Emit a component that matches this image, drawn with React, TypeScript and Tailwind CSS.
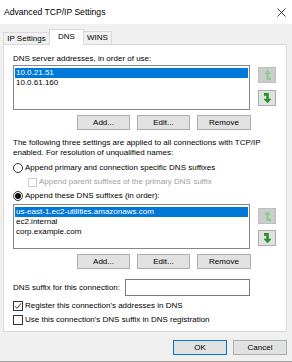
import React from "react";

function ArrowBtn({ dir, enabled }: { dir: "up" | "down"; enabled: boolean }) {
  const fill = enabled ? "#1e9e1e" : "#86cf86";
  return (
    <div
      className={
        enabled
          ? "w-[18px] h-[16px] bg-[#e1e1e1] border border-[#adadad] flex items-center justify-center"
          : "w-[18px] h-[16px] bg-[#cccccc] border border-[#bfbfbf] flex items-center justify-center"
      }
    >
      <svg width="7" height="10" viewBox="0 0 7 10">
        {dir === "up" ? (
          <path d="M3.5 0 L7 4 H4.5 V7.5 H7 V10 H2.5 V4 H0 Z" fill={fill} stroke={enabled ? "#0a6a0a" : "none"} strokeWidth={enabled ? 0.4 : 0} />
        ) : (
          <path d="M3.5 10 L0 6 H2.5 V2.5 H0 V0 H4.5 V6 H7 Z" fill={fill} stroke={enabled ? "#0a6a0a" : "none"} strokeWidth={enabled ? 0.4 : 0} />
        )}
      </svg>
    </div>
  );
}

function Btn({ label, w }: { label: string; w: string }) {
  return (
    <div className={`${w} h-[15px] bg-[#e1e1e1] border border-[#adadad] flex items-center justify-center leading-none`}>
      {label}
    </div>
  );
}

function ListBox({ items, h }: { items: string[]; h: string }) {
  return (
    <div className={`w-[237px] ${h} bg-white border border-[#828790] pt-[2px] px-[1px]`}>
      {items.map((it, i) => (
        <div
          key={it}
          className={
            i === 0
              ? "h-[10px] leading-[10px] px-[1px] bg-[#0078d7] text-white"
              : "h-[10px] leading-[10px] px-[1px]"
          }
        >
          {it}
        </div>
      ))}
    </div>
  );
}

export default function App() {
  return (
    <div className="w-[292px] h-[362px] bg-[#f0f0f0] flex flex-col overflow-hidden font-['Liberation_Sans',Arial,sans-serif] text-[8px] text-black border-b border-[#a0a0a0]">
      {/* Title bar */}
      <div className="h-[24px] bg-white flex items-center justify-between pl-[4px] pr-[6px] shrink-0">
        <span className="text-[8.6px] leading-none">Advanced TCP/IP Settings</span>
        <svg width="9" height="9" viewBox="0 0 9 9">
          <path d="M0.5 0.5 L8.5 8.5 M8.5 0.5 L0.5 8.5" stroke="#222" strokeWidth="0.9" />
        </svg>
      </div>

      {/* Tabs */}
      <div className="mt-[5px] h-[16px] -mb-[1px] flex items-end pl-[3px] relative z-10 shrink-0">
        <div className="w-[46px] h-[12px] mb-[1px] border-l border-t border-[#d9d9d9] flex items-center justify-center leading-none">
          IP Settings
        </div>
        <div className="w-[35px] h-[16px] bg-white border-l border-t border-r border-[#d9d9d9] flex items-center justify-center leading-none pb-[2px]">
          DNS
        </div>
        <div className="w-[28px] h-[13px] mb-[1px] border-t border-r border-[#d9d9d9] flex items-center justify-center leading-none">
          WINS
        </div>
      </div>

      {/* Panel */}
      <div className="mx-[3px] w-[284px] h-[288px] bg-white border border-[#d9d9d9] pl-[9px] shrink-0 flex flex-col">
        <div className="mt-[9px] h-[10px] leading-[10px]">DNS server addresses, in order of use:</div>
        <div className="mt-[1px] flex">
          <ListBox items={["10.0.21.51", "10.0.61.160"]} h="h-[45px]" />
          <div className="ml-[8px] flex flex-col">
            <div className="mt-[2px]">
              <ArrowBtn dir="up" enabled={false} />
            </div>
            <div className="mt-[7px]">
              <ArrowBtn dir="down" enabled={true} />
            </div>
          </div>
        </div>
        <div className="mt-[5px] flex pl-[64px] gap-[7px]">
          <Btn label="Add..." w="w-[53px]" />
          <Btn label="Edit..." w="w-[53px]" />
          <Btn label="Remove" w="w-[54px]" />
        </div>
        <div className="mt-[8px] leading-[10px]">
          The following three settings are applied to all connections with TCP/IP
          <br />
          enabled. For resolution of unqualified names:
        </div>
        <div className="mt-[3px] h-[14px] flex items-center">
          <div className="w-[10px] h-[10px] rounded-full border border-[#333] bg-white" />
          <span className="ml-[2px]">Append primary and connection specific DNS suffixes</span>
        </div>
        <div className="h-[14px] flex items-center pl-[15px]">
          <div className="w-[9px] h-[9px] border border-[#cccccc] bg-white" />
          <span className="ml-[2px] text-[#a0a0a0]">Append parent suffixes of the primary DNS suffix</span>
        </div>
        <div className="h-[14px] flex items-center">
          <div className="w-[10px] h-[10px] rounded-full border border-[#333] bg-white flex items-center justify-center">
            <div className="w-[6px] h-[6px] rounded-full bg-[#111]" />
          </div>
          <span className="ml-[2px]">Append these DNS suffixes (in order):</span>
        </div>
        <div className="mt-[1px] flex">
          <ListBox
            items={["us-east-1.ec2-utilities.amazonaws.com", "ec2.internal", "corp.example.com"]}
            h="h-[45px]"
          />
          <div className="ml-[8px] flex flex-col">
            <div className="mt-[4px]">
              <ArrowBtn dir="up" enabled={false} />
            </div>
            <div className="mt-[6px]">
              <ArrowBtn dir="down" enabled={true} />
            </div>
          </div>
        </div>
        <div className="mt-[5px] flex pl-[64px] gap-[7px]">
          <Btn label="Add..." w="w-[53px]" />
          <Btn label="Edit..." w="w-[53px]" />
          <Btn label="Remove" w="w-[54px]" />
        </div>
        <div className="mt-[10px] flex items-center h-[17px]">
          <span className="w-[112px]">DNS suffix for this connection:</span>
          <div className="w-[125px] h-[17px] bg-white border border-[#7a7a7a]" />
        </div>
        <div className="mt-[3px] h-[14px] flex items-center">
          <div className="w-[10px] h-[10px] border border-[#333] bg-white flex items-center justify-center">
            <svg width="8" height="8" viewBox="0 0 8 8">
              <path d="M1 4.2 L3 6.3 L7 1.3" fill="none" stroke="#222" strokeWidth="0.9" />
            </svg>
          </div>
          <span className="ml-[2px]">Register this connection's addresses in DNS</span>
        </div>
        <div className="h-[14px] flex items-center">
          <div className="w-[10px] h-[10px] border border-[#333] bg-white" />
          <span className="ml-[2px]">Use this connection's DNS suffix in DNS registration</span>
        </div>
      </div>

      {/* Footer */}
      <div className="mt-[8px] flex justify-end pr-[5px] gap-[6px]">
        <div className="w-[54px] h-[15px] bg-[#e1e1e1] border border-[#0078d7] flex items-center justify-center leading-none">
          OK
        </div>
        <div className="w-[54px] h-[15px] bg-[#e1e1e1] border border-[#adadad] flex items-center justify-center leading-none">
          Cancel
        </div>
      </div>
    </div>
  );
}
